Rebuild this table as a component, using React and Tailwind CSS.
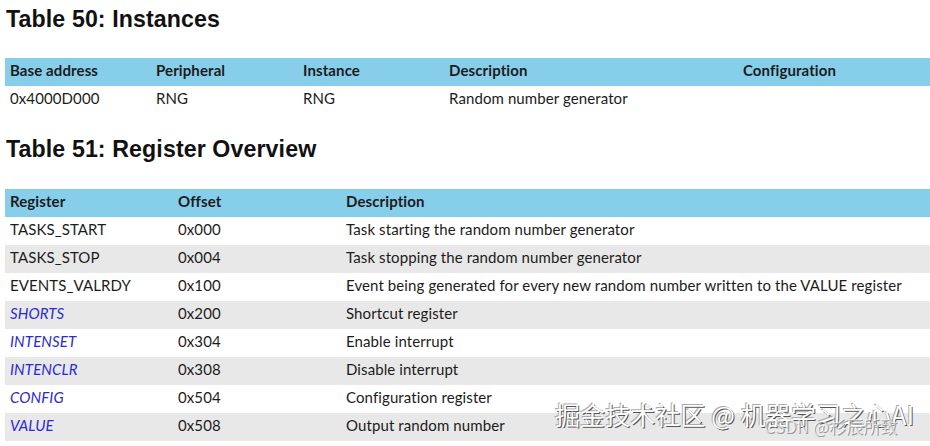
const instances = [
  { base: '0x4000D000', peripheral: 'RNG', instance: 'RNG', description: 'Random number generator', config: '' },
]

const registers = [
  { name: 'TASKS_START', offset: '0x000', description: 'Task starting the random number generator' },
  { name: 'TASKS_STOP', offset: '0x004', description: 'Task stopping the random number generator' },
  { name: 'EVENTS_VALRDY', offset: '0x100', description: 'Event being generated for every new random number written to the VALUE register' },
  { name: 'SHORTS', offset: '0x200', description: 'Shortcut register', link: true },
  { name: 'INTENSET', offset: '0x304', description: 'Enable interrupt', link: true },
  { name: 'INTENCLR', offset: '0x308', description: 'Disable interrupt', link: true },
  { name: 'CONFIG', offset: '0x504', description: 'Configuration register', link: true },
  { name: 'VALUE', offset: '0x508', description: 'Output random number', link: true },
]

function Title({ children, className }) {
  return (
    <h2 className={`pl-[6px] font-['Liberation_Sans',Arial,sans-serif] text-[23.2px] font-bold leading-[39px] text-[#111] ${className}`}>
      {children}
    </h2>
  )
}

export default function App() {
  return (
    <div className="relative h-[446px] w-[930px] overflow-hidden bg-white font-['Lato',sans-serif] text-[15px] tracking-[0.1px] text-[#1c1c1c]">
      <Title className="h-[58px]">Table 50: Instances</Title>

      <div className="ml-[5px]">
        <div className="flex h-[28px] items-center bg-[#87ceeb] pb-[3px] font-bold">
          <div className="w-[146px] pl-[5px]">Base address</div>
          <div className="w-[147px] pl-[5px]">Peripheral</div>
          <div className="w-[146px] pl-[5px]">Instance</div>
          <div className="w-[294px] pl-[5px]">Description</div>
          <div className="flex-1 pl-[5px]">Configuration</div>
        </div>
        {instances.map((r) => (
          <div key={r.base} className="flex h-[28px] items-center pb-[3px]">
            <div className="w-[146px] pl-[5px]">{r.base}</div>
            <div className="w-[147px] pl-[5px]">{r.peripheral}</div>
            <div className="w-[146px] pl-[5px]">{r.instance}</div>
            <div className="w-[294px] pl-[5px]">{r.description}</div>
            <div className="flex-1 pl-[5px]">{r.config}</div>
          </div>
        ))}
      </div>

      <Title className="h-[75px] pt-[16px]">Table 51: Register Overview</Title>

      <div className="ml-[5px]">
        <div className="flex h-[28px] items-center bg-[#87ceeb] pb-[3px] font-bold">
          <div className="w-[168px] pl-[5px]">Register</div>
          <div className="w-[168px] pl-[5px]">Offset</div>
          <div className="flex-1 pl-[5px]">Description</div>
        </div>
        {registers.map((r, i) => (
          <div key={r.name} className={`flex h-[28px] items-center pb-[3px] ${i % 2 === 1 ? 'bg-[#e8e8e8]' : 'bg-white'}`}>
            <div className={`w-[168px] pl-[5px] ${r.link ? 'italic text-[#2b2bd6]' : ''}`}>{r.name}</div>
            <div className="w-[168px] pl-[5px]">{r.offset}</div>
            <div className="flex-1 pl-[5px]">{r.description}</div>
          </div>
        ))}
      </div>

      {/* watermarks */}
      <div className="pointer-events-none absolute left-[555px] top-[398px] font-['Noto_Sans_CJK_SC',sans-serif] text-[25px] leading-[32px] text-white [text-shadow:1px_1px_0_#555,-1px_-1px_0_#aaa]">
        掘金技术社区 @ 机器学习之心AI
      </div>
      <div className="pointer-events-none absolute left-[764px] top-[414px] font-['Noto_Sans_CJK_SC',sans-serif] text-[17px] leading-[24px] text-white/60 [text-shadow:1px_1px_0_#999]">
        CSDN @杉辰所致
      </div>
    </div>
  )
}
